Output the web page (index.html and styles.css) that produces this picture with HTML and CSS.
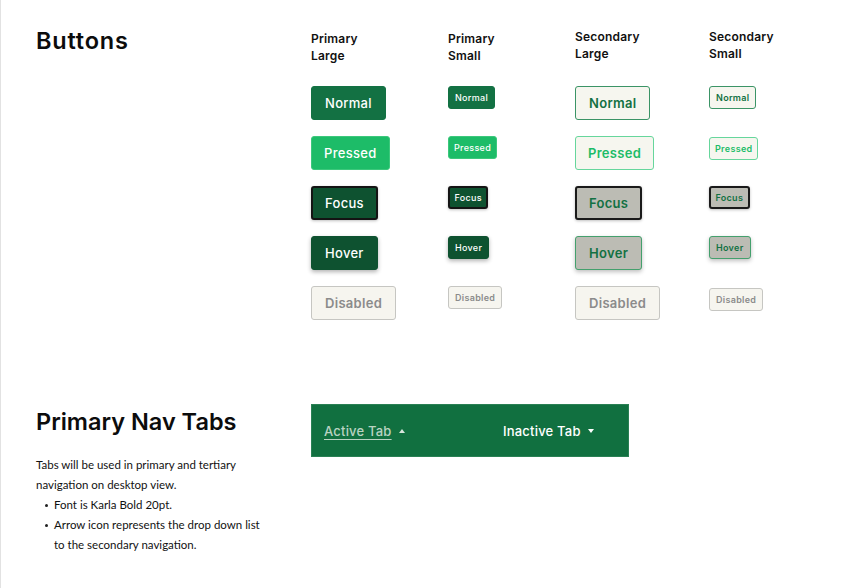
FILE: index.html
```html
<!DOCTYPE html>
<html>
<head>
<meta charset="utf-8">
<link rel="stylesheet" href="styles.css">
</head>
<body>
<div class="page">
  <section class="buttons-section">
    <h1 class="title title-buttons">Buttons</h1>
    <div class="col col-pl">
      <div class="col-head">Primary<br>Large</div>
      <div class="cell"><span class="btn lg p-normal">Normal</span></div>
      <div class="cell"><span class="btn lg p-pressed">Pressed</span></div>
      <div class="cell"><span class="btn lg p-focus">Focus</span></div>
      <div class="cell"><span class="btn lg p-hover">Hover</span></div>
      <div class="cell"><span class="btn lg disabled">Disabled</span></div>
    </div>
    <div class="col col-ps">
      <div class="col-head">Primary<br>Small</div>
      <div class="cell"><span class="btn sm p-normal">Normal</span></div>
      <div class="cell"><span class="btn sm p-pressed">Pressed</span></div>
      <div class="cell"><span class="btn sm p-focus">Focus</span></div>
      <div class="cell"><span class="btn sm p-hover">Hover</span></div>
      <div class="cell"><span class="btn sm disabled">Disabled</span></div>
    </div>
    <div class="col col-sl">
      <div class="col-head">Secondary<br>Large</div>
      <div class="cell"><span class="btn lg s-normal">Normal</span></div>
      <div class="cell"><span class="btn lg s-pressed">Pressed</span></div>
      <div class="cell"><span class="btn lg s-focus">Focus</span></div>
      <div class="cell"><span class="btn lg s-hover">Hover</span></div>
      <div class="cell"><span class="btn lg disabled">Disabled</span></div>
    </div>
    <div class="col col-ss">
      <div class="col-head">Secondary<br>Small</div>
      <div class="cell"><span class="btn sm s-normal">Normal</span></div>
      <div class="cell"><span class="btn sm s-pressed shift1">Pressed</span></div>
      <div class="cell"><span class="btn sm s-focus">Focus</span></div>
      <div class="cell"><span class="btn sm s-hover">Hover</span></div>
      <div class="cell"><span class="btn sm disabled shift2">Disabled</span></div>
    </div>
  </section>

  <section class="nav-section">
    <div class="nav-info">
      <h2 class="title title-nav">Primary Nav Tabs</h2>
      <p class="desc">Tabs will be used in primary and tertiary navigation on desktop view.</p>
      <ul class="notes">
        <li>Font is Karla Bold 20pt.</li>
        <li>Arrow icon represents the drop down list to the secondary navigation.</li>
      </ul>
    </div>
    <div class="navbar">
      <span class="tab active"><span class="tab-label">Active Tab</span><span class="arrow up"></span></span>
      <span class="tab inactive"><span class="tab-label">Inactive Tab</span><span class="arrow down"></span></span>
    </div>
  </section>
</div>
</body>
</html>
```

FILE: styles.css
```css
* { box-sizing: border-box; }
html, body { margin: 0; padding: 0; background: #fff; }
.page {
  width: 866px;
  height: 588px;
  border-left: 1px solid #e2e2e2;
  padding: 0 0 0 35px;
  font-family: Inter, "Liberation Sans", sans-serif;
  color: #111;
  overflow: hidden;
}
.title {
  margin: 0;
  font-family: Inter, sans-serif;
  font-weight: 600;
  font-size: 23.5px;
  line-height: 30px;
  color: #0c0c0c;
}
.title-buttons { letter-spacing: 0.8px; }
.title-nav { letter-spacing: 0; }
.buttons-section {
  display: grid;
  grid-template-columns: 275px 137px 127px 134px 1fr;
  padding-top: 26px;
  height: 392px;
}
.col { display: flex; flex-direction: column; }
.col-head {
  font-weight: 600;
  font-size: 12px;
  line-height: 17px;
  height: 56px;
  margin-top: 4px;
  margin-bottom: 0;
  color: #111;
  letter-spacing: 0.2px;
}
.col-sl .col-head, .col-ss .col-head { margin-top: 2px; margin-bottom: 2px; }
.cell { height: 50px; display: flex; align-items: flex-start; }
.btn {
  display: inline-flex;
  align-items: center;
  justify-content: center;
  border: 1px solid transparent;
  border-radius: 3px;
  font-weight: 500;
  white-space: nowrap;
  letter-spacing: 0.3px;
}
.btn.lg { height: 34px; padding: 0 13px; font-size: 13px; }
.btn.sm { height: 23px; padding: 0 6px; font-size: 9px; border-radius: 3px; }
.btn.lg.p-pressed, .btn.lg.s-pressed { padding: 0 12px; }
.btn.lg.p-focus, .btn.lg.s-focus { padding: 0 12px; }
.btn.sm.p-focus, .btn.sm.s-focus { padding: 0 4.5px; }
.btn.sm.p-pressed, .btn.sm.s-pressed { padding: 0 5px; }
.shift1 { margin-top: 1px; }
.shift2 { margin-top: 2px; }

.p-normal { background: #137143; border-color: #137143; color: #fff; }
.p-pressed { background: #1dbc68; border-color: #3cc87c; color: #fff; }
.p-focus { background: #0e5230; border: 2px solid #141414; color: #fff; box-shadow: 0 1px 3px rgba(0,0,0,0.25); }
.p-hover { background: #0e5230; border-color: #0e5230; color: #fff; box-shadow: 0 2px 4px rgba(0,0,0,0.3); }
.s-normal { background: #f6f6ef; border-color: #3b9466; color: #137143; font-weight: 600; }
.s-pressed { background: #f6f6ef; border-color: #66d69c; color: #1dbc68; font-weight: 600; }
.s-focus { background: #bcbcb4; border: 2px solid #1a1a1a; color: #137143; font-weight: 600; box-shadow: 0 1px 3px rgba(0,0,0,0.25); }
.s-hover { background: #bcbcb4; border-color: #44a06d; color: #137143; font-weight: 600; box-shadow: 0 2px 4px rgba(0,0,0,0.25); }
.disabled { background: #f6f5ef; border-color: #c6c6c2; color: #8b8b8b; font-weight: 600; }

.nav-section {
  display: grid;
  grid-template-columns: 275px 318px;
  align-items: start;
}
.nav-info { padding-top: 15px; }
.desc {
  margin: 18px 0 0;
  font-family: Lato, sans-serif;
  font-size: 11.5px;
  line-height: 20px;
  color: #111;
  width: 230px;
}
.notes {
  margin: 0;
  padding: 0 0 0 18px;
  list-style: none;
  font-family: Lato, sans-serif;
  font-size: 11.5px;
  line-height: 20px;
  color: #111;
  width: 232px;
}
.notes li { position: relative; }
.notes li::before {
  content: "";
  position: absolute;
  left: -9px;
  top: 9px;
  width: 3px;
  height: 3px;
  border-radius: 50%;
  background: #222;
}
.navbar {
  margin-top: 12px;
  height: 53px;
  background: #117040;
  border: 1px solid #2a8054;
  display: flex;
  align-items: center;
  padding: 0 0 0 12px;
  font-family: Inter, sans-serif;
  font-weight: 500;
  font-size: 13px;
  letter-spacing: 0.2px;
}
.tab { display: inline-flex; align-items: center; }
.tab.active { color: #b9d3c2; width: 179px; }
.tab.active .tab-label { text-decoration: underline; text-underline-offset: 3px; }
.tab.inactive { color: #fff; }
.arrow { display: inline-block; width: 0; height: 0; margin-left: 7px; border-left: 3.5px solid transparent; border-right: 3.5px solid transparent; }
.arrow.up { border-bottom: 4px solid #d8e6dc; }
.arrow.down { border-top: 4px solid #fff; }
```
